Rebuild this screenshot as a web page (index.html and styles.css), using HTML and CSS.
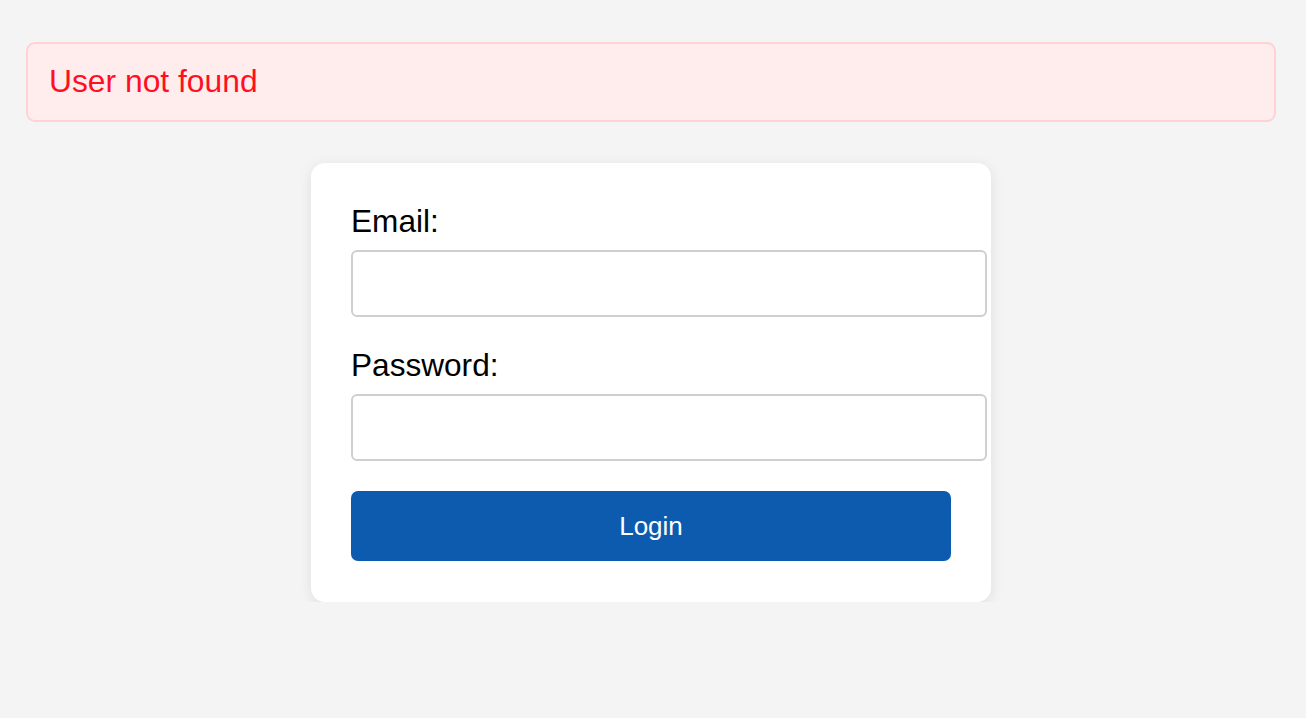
FILE: index.html
```html
<!DOCTYPE html>
<html lang="en">
<head>
<meta charset="utf-8">
<title>Login</title>
<link rel="stylesheet" href="styles.css">
</head>
<body>
<div class="page">
  <div class="alert">User not found</div>
  <form class="card">
    <label class="label" for="email">Email:</label>
    <input class="input" id="email" type="email">
    <label class="label label-gap" for="password">Password:</label>
    <input class="input" id="password" type="password">
    <button class="btn" type="button">Login</button>
  </form>
</div>
</body>
</html>
```
FILE: styles.css
```css
html, body {
  margin: 0;
  padding: 0;
  background: #f4f4f4;
  font-family: "Liberation Sans", Arial, sans-serif;
}
.page {
  width: 1250px;
  margin-left: 26px;
  padding-top: 42px;
}
.alert {
  box-sizing: border-box;
  height: 80px;
  padding: 19px 21px 0;
  background: #ffeded;
  border: 2px solid #ffd3d3;
  border-radius: 9px;
  color: #ff0f1f;
  font-size: 31.8px;
  line-height: 36px;
}
.card {
  box-sizing: border-box;
  width: 680px;
  margin: 41px auto 0;
  padding: 40px 40px 41px;
  background: #ffffff;
  border-radius: 14px;
  box-shadow: 0 3px 14px rgba(0, 0, 0, 0.09);
  display: flex;
  flex-direction: column;
  align-items: flex-start;
}
.label {
  display: block;
  font-size: 31.6px;
  line-height: 36px;
  color: #000;
  margin-bottom: 11px;
}
.label-gap {
  margin-top: 30px;
}
.input {
  box-sizing: border-box;
  width: 636px;
  height: 67px;
  margin: 0;
  padding: 0 17px;
  border: 2px solid #cfcfcf;
  border-radius: 6px;
  background: #fff;
  font-family: inherit;
  font-size: 26px;
  outline: none;
}
.btn {
  width: 600px;
  height: 70px;
  margin-top: 30px;
  border: none;
  border-radius: 7px;
  background: #0c5baf;
  color: #fff;
  font-family: inherit;
  font-size: 26px;
  cursor: pointer;
}
```
